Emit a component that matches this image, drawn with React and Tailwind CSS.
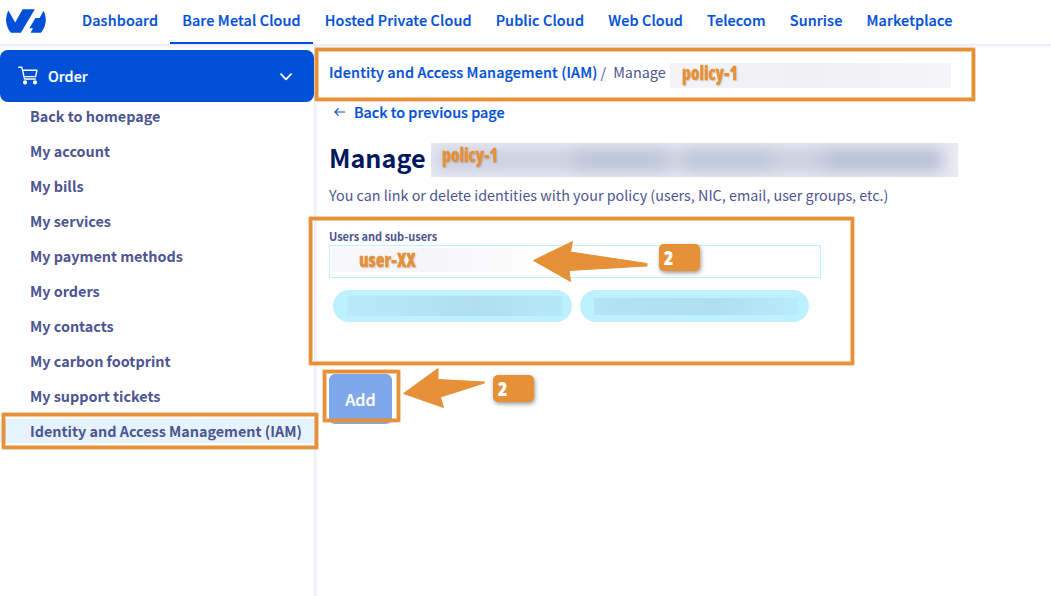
import React from 'react';

const universes = ['Dashboard', 'Bare Metal Cloud', 'Hosted Private Cloud', 'Public Cloud', 'Web Cloud', 'Telecom', 'Sunrise', 'Marketplace'];
const menu = ['Back to homepage', 'My account', 'My bills', 'My services', 'My payment methods', 'My orders', 'My contacts', 'My carbon footprint', 'My support tickets', 'Identity and Access Management (IAM)'];

function Logo() {
  return (
    <svg className="h-[44px] w-[70px] shrink-0" viewBox="0 0 70 44" fill="#0050d7">
      <path d="M8.4 10.5 15.2 22.6 22.6 9.2H34.8L20.9 32.8H10.8C5.6 26 4.6 18 8.4 10.5Z" />
      <path d="M43.5 10.8C47.2 18 46.4 26.3 40.9 32.8H30.6L33 28.2H29.4L35.4 18H39.6Z" />
    </svg>
  );
}

function Header() {
  return (
    <header className="relative z-10 flex h-11 bg-white shadow-[0_1px_3px_1px_#e6e8f8]">
      <Logo />
      <nav className="flex">
        {universes.map((name, i) => (
          <a key={name} className={`flex h-11 items-center whitespace-nowrap border-b-2 px-3 pb-[3px] text-[14.4px] leading-6 tracking-[0.135px] font-medium text-[#0050d7] [-webkit-text-stroke:0.2px_#0050d7] ${i === 1 ? 'border-[#0050d7]' : 'border-transparent'}`}>{name}</a>
        ))}
      </nav>
    </header>
  );
}

function Sidebar() {
  return (
    <aside className="w-[314px] shrink-0 bg-white pt-1.5 shadow-[1px_0_3px_1px_#e6e8f8]">
      <button className="flex h-[52px] w-full items-center rounded-lg bg-[#0050d7] pl-[18px] pr-[21px] text-white">
        <svg className="h-5 w-5" viewBox="0 0 20 20" fill="none" stroke="white" strokeWidth="1.4" strokeLinecap="round" strokeLinejoin="round">
          <path d="M.7 1.3H3.8L6.6 13H17.4M4.6 4.3H19L17.6 10.6H6.1" />
          <circle cx="7" cy="16.4" r="1.4" fill="white" />
          <circle cx="17" cy="16.4" r="1.4" fill="white" />
        </svg>
        <span className="ml-2.5 flex-1 text-left text-[14.4px] leading-6 font-medium [-webkit-text-stroke:0.2px_white]">Order</span>
        <svg className="h-3 w-[14px]" viewBox="0 0 14 12" fill="none" stroke="white" strokeWidth="1.8" strokeLinecap="round" strokeLinejoin="round"><path d="M2 4.1 7 9.3 12 4.1" /></svg>
      </button>
      <ul className="flex flex-col gap-[11px] pt-0.5">
        {menu.map((name, i) => (
          <li key={name} className={`h-6 whitespace-nowrap pl-[30px] text-[14.4px] leading-6 tracking-[-0.015px] font-bold text-[#4d5592] ${i === 9 ? 'bg-[#e4f3fc]' : ''}`}>{name}</li>
        ))}
      </ul>
    </aside>
  );
}

function Note({ className, children }) {
  return <span className={`absolute origin-left whitespace-nowrap font-['Open_Sans',sans-serif] text-[20px] leading-6 font-extrabold text-[#e69138] [font-stretch:75%] [-webkit-text-stroke:0.3px_#e69138] [text-shadow:1px_1px_2px_#00000033] ${className}`}>{children}</span>;
}

function Frame({ className }) {
  return <div className={`absolute z-20 rounded-[1px] border-3 border-[#e69138] shadow-[0_0_0_1px_#e6913866,inset_0_0_0_1px_#e6913880] ${className}`} />;
}

function Badge({ className }) {
  return (
    <div className={`absolute z-20 flex h-[27px] w-[41px] items-center rounded-[5px] bg-[#e69138] pl-[5px] shadow-[1px_2px_4px_#00000066] ${className}`}>
      <span className="font-['Open_Sans',sans-serif] text-[19px] leading-6 font-extrabold text-white [font-stretch:75%] [-webkit-text-stroke:0.2px_white]">2</span>
    </div>
  );
}

function Main() {
  return (
    <main className="flex-1 pl-[15px] pt-[19px]">
      <div className="flex h-[25px] items-start whitespace-nowrap text-[14.4px] leading-[18px] text-[#4d5592]">
        <a className="tracking-[0.125px] font-medium text-[#0050d7] [-webkit-text-stroke:0.2px_#0050d7]">Identity and Access Management (IAM)</a>
        <span className="ml-[3px]">/</span>
        <span className="ml-[7px]">Manage</span>
        <span className="relative ml-1 h-[25px] w-[281px] bg-linear-to-r from-[#f3f3f7] via-[#f0f0f5] to-[#f4f4f9]">
          <Note className="left-[12px] -top-[2px] scale-x-[0.84]">policy-1</Note>
        </span>
      </div>
      <div className="mt-3 flex h-6 items-center gap-2 pl-[5px]">
        <svg className="h-3 w-3" viewBox="0 0 12 12" fill="none" stroke="#0050d7" strokeWidth="1.2" strokeLinecap="round" strokeLinejoin="round"><path d="M10.6 6H1M4.3 2.7 1 6l3.3 3.3" /></svg>
        <a className="text-[14.4px] leading-6 font-medium text-[#0050d7] [-webkit-text-stroke:0.2px_#0050d7]">Back to previous page</a>
      </div>
      <div className="mt-[19px] flex h-[34px] items-start">
        <h1 className="w-[102px] text-[25.2px] leading-[29px] font-bold text-[#00185e]">Manage</h1>
        <div className="relative h-[34px] w-[527px]">
          <div className="h-full overflow-hidden bg-[#eaebf2]">
            <div className="flex h-full items-center pl-1 blur-[8px]">
              <div className="h-6 w-[70px] bg-[#cacfe0]" />
              <div className="h-6 w-[70px] bg-[#cbd0e0]" />
              <div className="h-6 w-[90px] bg-[#bbc2d7]" />
              <div className="h-6 w-[20px] bg-[#ccd1e0]" />
              <div className="h-6 w-[85px] bg-[#bcc3d8]" />
              <div className="h-6 w-[55px] bg-[#c8cdde]" />
              <div className="h-6 w-[118px] bg-[#b7bfd5]" />
            </div>
          </div>
          <Note className="left-[11px] top-0 scale-x-[0.84]">policy-1</Note>
        </div>
      </div>
      <p className="mt-[6px] whitespace-nowrap text-[14.35px] leading-6 text-[#4d5592]">You can link or delete identities with your policy (users, NIC, email, user groups, etc.)</p>
      <label className="mt-5 block text-[11px] leading-[18px] tracking-[-0.01px] font-bold text-[#4d5592]">Users and sub-users</label>
      <div className="relative h-[33px] w-[492px] border border-[#bef1ff] bg-white pl-[2px] pt-[2px]">
        <div className="h-6 w-[197px] bg-linear-to-r from-[#f8f8fa] via-[#f6f6f9] to-[#fdfdfe]" />
        <Note className="left-[29px] top-[2px] scale-x-[0.9]">user-XX</Note>
      </div>
      <div className="mt-3 flex gap-2 pl-1">
        <div className="flex h-8 w-[239px] items-center rounded-full bg-[#bef1ff] pl-[14px]">
          <div className="h-5 w-[216px] bg-linear-to-r from-[#b8eaf9] from-0% via-[#afdff0] via-60% to-[#b6e9f8] to-100%" />
        </div>
        <div className="flex h-8 w-[229px] items-center rounded-full bg-[#bef1ff] pl-[14px]">
          <div className="h-[17px] w-[204px] bg-linear-to-r from-[#b3e4f3] from-0% via-[#afdff0] via-60% to-[#b9ecfa] to-100%" />
        </div>
      </div>
      <button className="mt-[52px] flex h-[50px] w-[63px] items-center justify-center rounded-md bg-[#7fa7eb] text-[16.2px] leading-6 font-medium text-white [-webkit-text-stroke:0.2px_white]">Add</button>
    </main>
  );
}

export default function App() {
  return (
    <div className="relative flex h-[596px] w-[1051px] flex-col overflow-hidden bg-white font-['Noto_Sans_CJK_SC',sans-serif]">
      <Header />
      <div className="flex flex-1">
        <Sidebar />
        <Main />
      </div>
      <Frame className="left-[315px] top-[48px] h-[53px] w-[660px]" />
      <Frame className="left-[309px] top-[217px] h-[148px] w-[545px]" />
      <Frame className="left-[323px] top-[370px] h-[52px] w-[77px]" />
      <Frame className="left-[2px] top-[413px] h-[36px] w-[316px]" />
      <svg className="absolute left-[532px] top-[240px] z-20 h-[43px] w-[117px]" viewBox="532 240 117 43" fill="#e69138" stroke="#e69138" strokeLinejoin="round">
        <path d="M533.5 260.5 572.5 241.5 570.5 252 647 263.5V266L569 270.5 570.5 281.5Z" />
      </svg>
      <svg className="absolute left-[402px] top-[367px] z-20 h-[42px] w-[84px]" viewBox="402 367 84 42" fill="#e69138" stroke="#e69138" strokeLinejoin="round">
        <path d="M403.5 393.5 438 368.5V379.5L484.5 382V383L440.5 397 443.5 407.5Z" />
      </svg>
      <Badge className="left-[659px] top-[244px]" />
      <Badge className="left-[493px] top-[375px]" />
    </div>
  );
}
